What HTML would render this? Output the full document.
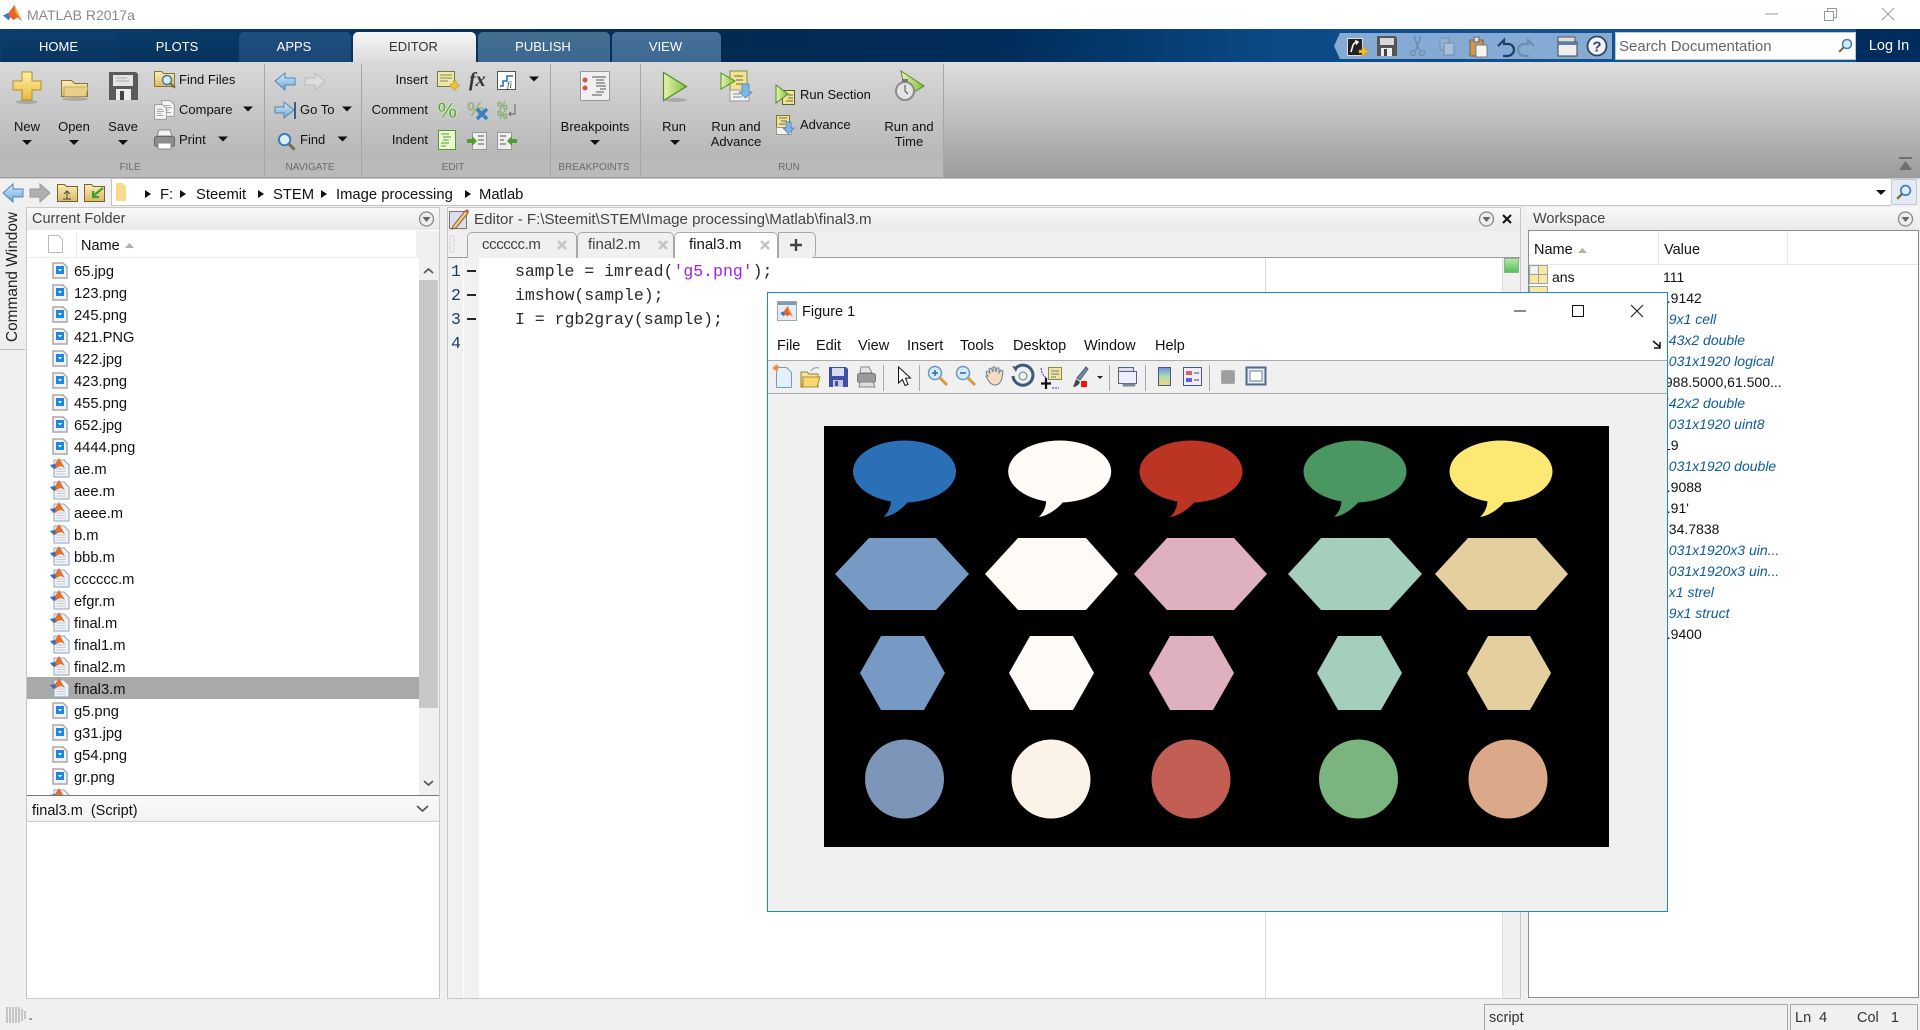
<!DOCTYPE html>
<html><head><meta charset="utf-8"><title>MATLAB R2017a</title>
<style>
html,body{margin:0;padding:0}
body{width:1920px;height:1030px;position:relative;overflow:hidden;background:#f0f0f0;font-family:"Liberation Sans",sans-serif;font-size:14.5px;color:#111}
.a{position:absolute;box-sizing:border-box}
.t{position:absolute;white-space:nowrap;line-height:20px;height:20px}
.c{transform:translateX(-50%)}
.e{transform:translateX(-100%)}
.rb{font-size:13px;color:#111}
.lb{font-size:10px;color:#6a6a6a}
.tab{position:absolute;top:32px;height:30px;border-radius:5px 5px 0 0;color:#fff;font-size:13px;line-height:30px;text-align:center;padding-right:2px;box-sizing:border-box}
.r{position:relative;height:22px;line-height:26px;padding-left:47px;font-size:14.7px;white-space:nowrap}
.r svg{position:absolute;left:25px;top:3px}
.r svg.mi{left:23px;top:1px}
.r.sel{background:#a9a9a9}
.code{font-family:"Liberation Mono",monospace;font-size:16.5px;color:#2a2a2a}
.v{position:absolute;white-space:nowrap;font-size:14px;line-height:20px;height:20px}
.i{font-style:italic;color:#0e5a9e}
.m{position:absolute;top:336px;font-size:14.5px;line-height:20px;white-space:nowrap;color:#111}
svg.o{position:absolute;left:0;top:0}
</style></head><body>

<!-- title bar -->
<div class="a" style="left:0;top:0;width:1920px;height:29px;background:#fff"></div>
<div class="t" style="left:27px;top:5px;font-size:14px;color:#8a8a8a">MATLAB R2017a</div>

<!-- blue bar -->
<div class="a" style="left:0;top:29px;width:1920px;height:33px;background:linear-gradient(90deg,#0b3c6c 0,#032b52 720px,#002c5a 1000px,#0b4a87 1280px,#12528f 1600px,#12528f 1920px)"></div>
<div class="tab" style="left:2px;width:115px;background:linear-gradient(#0c3d6d,#093560)">HOME</div>
<div class="tab" style="left:119px;width:118px;background:linear-gradient(#0a3a68,#07325c)">PLOTS</div>
<div class="tab" style="left:239px;width:112px;background:linear-gradient(#204e7f,#1a4776)">APPS</div>
<div class="tab" style="left:353px;width:123px;background:linear-gradient(#f6f6f6,#dcdcdc);color:#333">EDITOR</div>
<div class="tab" style="left:478px;width:132px;background:linear-gradient(#44708f,#3b6690)">PUBLISH</div>
<div class="tab" style="left:612px;width:109px;background:linear-gradient(#46719a,#3d6890)">VIEW</div>

<!-- quick access -->
<div class="a" style="left:1334px;top:33px;width:278px;height:26px;background:#85abd4;clip-path:polygon(6px 0,100% 0,100% 100%,6px 100%,0 50%)"></div>
<div class="a" style="left:1615px;top:32px;width:241px;height:28px;background:#fff;border:1px solid #b8c8d8"></div>
<div class="t" style="left:1619px;top:37px;font-size:15px;color:#666">Search Documentation</div>
<div class="a" style="left:1856px;top:29px;width:64px;height:33px;background:#002c5e"></div>
<div class="t c" style="left:1889px;top:36px;font-size:14.5px;color:#fff">Log In</div>

<!-- ribbon -->
<div class="a" style="left:0;top:62px;width:1920px;height:115px;background:linear-gradient(#dedede,#9d9d9d)"></div>
<div class="a" style="left:0;top:62px;width:943px;height:115px;background:linear-gradient(#d9d9d9,#b0b0b0)"></div>
<div class="a" style="left:0;top:159px;width:943px;height:18px;background:#bababa"></div>
<div class="a" style="left:264px;top:64px;width:1px;height:112px;background:#a6a6a6"></div>
<div class="a" style="left:361px;top:64px;width:1px;height:112px;background:#a6a6a6"></div>
<div class="a" style="left:550px;top:64px;width:1px;height:112px;background:#a6a6a6"></div>
<div class="a" style="left:640px;top:64px;width:1px;height:112px;background:#a6a6a6"></div>
<div class="a" style="left:943px;top:64px;width:1px;height:112px;background:#a6a6a6"></div>
<div class="a" style="left:0;top:177px;width:1920px;height:1px;background:#9c9c9c"></div>

<div class="t rb c" style="left:27px;top:117px">New</div>
<div class="t rb c" style="left:74px;top:117px">Open</div>
<div class="t rb c" style="left:123px;top:117px">Save</div>
<div class="t rb" style="left:179px;top:70px">Find Files</div>
<div class="t rb" style="left:179px;top:100px">Compare</div>
<div class="t rb" style="left:179px;top:130px">Print</div>
<div class="t rb" style="left:300px;top:100px">Go To</div>
<div class="t rb" style="left:300px;top:130px">Find</div>
<div class="t rb e" style="left:428px;top:70px">Insert</div>
<div class="t rb e" style="left:428px;top:100px">Comment</div>
<div class="t rb e" style="left:428px;top:130px">Indent</div>
<div class="t rb c" style="left:595px;top:117px">Breakpoints</div>
<div class="t rb c" style="left:674px;top:117px">Run</div>
<div class="t rb c" style="left:736px;top:117px">Run and</div>
<div class="t rb c" style="left:736px;top:132px">Advance</div>
<div class="t rb" style="left:800px;top:85px">Run Section</div>
<div class="t rb" style="left:800px;top:115px">Advance</div>
<div class="t rb c" style="left:909px;top:117px">Run and</div>
<div class="t rb c" style="left:909px;top:132px">Time</div>
<div class="t lb c" style="left:130px;top:158px">FILE</div>
<div class="t lb c" style="left:310px;top:158px">NAVIGATE</div>
<div class="t lb c" style="left:453px;top:158px">EDIT</div>
<div class="t lb c" style="left:594px;top:158px">BREAKPOINTS</div>
<div class="t lb c" style="left:789px;top:158px">RUN</div>

<!-- address bar -->
<div class="a" style="left:0;top:178px;width:1920px;height:29px;background:#f0f0f0;border-top:1px solid #d0d0d0"></div>
<div class="a" style="left:111px;top:178px;width:1780px;height:28px;background:#fff;border:1px solid #c4c4c4;border-width:1px 0 1px 1px"></div>
<div class="a" style="left:1891px;top:179px;width:26px;height:26px;background:#e4eaf3;border:1px solid #c4c8d0"></div>
<div class="t" style="left:160px;top:185px;font-size:14.8px">F:</div>
<div class="t" style="left:196px;top:185px;font-size:14.8px">Steemit</div>
<div class="t" style="left:273px;top:185px;font-size:14.8px">STEM</div>
<div class="t" style="left:336px;top:185px;font-size:14.8px">Image processing</div>
<div class="t" style="left:479px;top:185px;font-size:14.8px">Matlab</div>

<!-- Command Window side tab -->
<div class="a" style="left:0;top:207px;width:25px;height:143px;background:#eee;border-bottom:1px solid #bbb"></div>
<div class="t" style="left:13px;top:342px;width:132px;font-size:15.4px;transform-origin:0 0;transform:rotate(-90deg) translateY(-10px);color:#222">Command Window</div>

<!-- current folder panel -->
<div class="a" style="left:26px;top:207px;width:414px;height:792px;background:#fff;border:1px solid #c8c8c8"></div>
<div class="a" style="left:27px;top:208px;width:412px;height:22px;background:linear-gradient(#f8f8f8,#e8e8e8)"></div>
<div class="t" style="left:32px;top:209px;color:#444">Current Folder</div>
<div class="a" style="left:76px;top:231px;width:1px;height:26px;background:#e8e8e8"></div>
<div class="a" style="left:27px;top:257px;width:392px;height:1px;background:#ececec"></div>
<div class="a" style="left:416px;top:231px;width:23px;height:27px;background:#f0f0f0"></div>
<div class="t" style="left:81px;top:236px">Name</div>
<div class="a" style="left:419px;top:258px;width:20px;height:537px;background:#f0f0f0"></div>
<div class="a" style="left:419px;top:280px;width:19px;height:428px;background:#c8c8c8"></div>
<div class="a" style="left:27px;top:259px;width:392px;height:536px;overflow:hidden">
<div class="r"><svg width="16" height="17"><use href="#img"/></svg>65.jpg</div>
<div class="r"><svg width="16" height="17"><use href="#img"/></svg>123.png</div>
<div class="r"><svg width="16" height="17"><use href="#img"/></svg>245.png</div>
<div class="r"><svg width="16" height="17"><use href="#img"/></svg>421.PNG</div>
<div class="r"><svg width="16" height="17"><use href="#img"/></svg>422.jpg</div>
<div class="r"><svg width="16" height="17"><use href="#img"/></svg>423.png</div>
<div class="r"><svg width="16" height="17"><use href="#img"/></svg>455.png</div>
<div class="r"><svg width="16" height="17"><use href="#img"/></svg>652.jpg</div>
<div class="r"><svg width="16" height="17"><use href="#img"/></svg>4444.png</div>
<div class="r"><svg class="mi" width="20" height="20"><use href="#mf"/></svg>ae.m</div>
<div class="r"><svg class="mi" width="20" height="20"><use href="#mf"/></svg>aee.m</div>
<div class="r"><svg class="mi" width="20" height="20"><use href="#mf"/></svg>aeee.m</div>
<div class="r"><svg class="mi" width="20" height="20"><use href="#mf"/></svg>b.m</div>
<div class="r"><svg class="mi" width="20" height="20"><use href="#mf"/></svg>bbb.m</div>
<div class="r"><svg class="mi" width="20" height="20"><use href="#mf"/></svg>cccccc.m</div>
<div class="r"><svg class="mi" width="20" height="20"><use href="#mf"/></svg>efgr.m</div>
<div class="r"><svg class="mi" width="20" height="20"><use href="#mf"/></svg>final.m</div>
<div class="r"><svg class="mi" width="20" height="20"><use href="#mf"/></svg>final1.m</div>
<div class="r"><svg class="mi" width="20" height="20"><use href="#mf"/></svg>final2.m</div>
<div class="r sel"><svg class="mi" width="20" height="20"><use href="#mf"/></svg>final3.m</div>
<div class="r"><svg width="16" height="17"><use href="#img"/></svg>g5.png</div>
<div class="r"><svg width="16" height="17"><use href="#img"/></svg>g31.jpg</div>
<div class="r"><svg width="16" height="17"><use href="#img"/></svg>g54.png</div>
<div class="r"><svg width="16" height="17"><use href="#img"/></svg>gr.png</div>
<div class="r"><svg class="mi" width="20" height="20"><use href="#mf"/></svg></div>
</div>
<div class="a" style="left:27px;top:795px;width:412px;height:27px;background:linear-gradient(#fafafa,#f2f2f2);border-top:1px solid #777;border-bottom:1px solid #cfcfcf"></div>
<div class="t" style="left:32px;top:801px">final3.m&nbsp; (Script)</div>

<!-- editor panel -->
<div class="a" style="left:447px;top:207px;width:1074px;height:792px;background:#fff;border:1px solid #c8c8c8"></div>
<div class="a" style="left:448px;top:208px;width:1072px;height:23px;background:linear-gradient(#f8f8f8,#eaeaea)"></div>
<div class="t" style="left:474px;top:210px;font-size:15.1px;color:#444">Editor - F:\Steemit\STEM\Image processing\Matlab\final3.m</div>
<div class="a" style="left:448px;top:231px;width:1072px;height:27px;background:#f0f0f0;border-bottom:1px solid #9a9a9a"></div>
<div class="a" style="left:467px;top:232px;width:110px;height:26px;background:#f0f0f0;border:1px solid #a8a8a8;border-bottom:0;border-radius:5px 5px 0 0"></div>
<div class="a" style="left:577px;top:232px;width:97px;height:26px;background:#f0f0f0;border:1px solid #a8a8a8;border-bottom:0;border-radius:5px 5px 0 0"></div>
<div class="a" style="left:674px;top:232px;width:104px;height:26px;background:#fff;border:1px solid #a8a8a8;border-bottom:0;border-radius:5px 5px 0 0"></div>
<div class="a" style="left:778px;top:232px;width:38px;height:26px;background:#f0f0f0;border:1px solid #a8a8a8;border-bottom:0;border-radius:0 5px 5px 0"></div>
<div class="t" style="left:482px;top:235px;font-size:15px;letter-spacing:-.4px;color:#444">cccccc.m</div>
<div class="t" style="left:588px;top:235px;font-size:15px;color:#444">final2.m</div>
<div class="t" style="left:689px;top:235px;font-size:15px;color:#111">final3.m</div>
<div class="a" style="left:448px;top:258px;width:31px;height:740px;background:#f1f1f1"></div>
<div class="a" style="left:463px;top:258px;width:1px;height:740px;background:#fff"></div>
<div class="a" style="left:1265px;top:258px;width:1px;height:740px;background:#dcdcdc"></div>
<div class="a" style="left:1502px;top:258px;width:18px;height:740px;background:#f0f0f0;border-left:1px solid #ddd"></div>
<div class="t code" style="left:451px;top:262px;color:#1d3b5a">1</div>
<div class="t code" style="left:451px;top:286px;color:#1d3b5a">2</div>
<div class="t code" style="left:451px;top:310px;color:#1d3b5a">3</div>
<div class="t code" style="left:451px;top:334px;color:#1d3b5a">4</div>
<div class="a" style="left:467px;top:270px;width:9px;height:2px;background:#222"></div>
<div class="a" style="left:467px;top:294px;width:9px;height:2px;background:#222"></div>
<div class="a" style="left:467px;top:318px;width:9px;height:2px;background:#222"></div>
<div class="t code" style="left:515px;top:262px">sample = imread(<span style="color:#a020f0">'g5.png'</span>);</div>
<div class="t code" style="left:515px;top:286px">imshow(sample);</div>
<div class="t code" style="left:515px;top:310px">I = rgb2gray(sample);</div>
<div class="a" style="left:1504px;top:258px;width:15px;height:15px;background:linear-gradient(#b4e6a8,#4fc25a);border:1px solid #8fae8f"></div>

<!-- workspace -->
<div class="a" style="left:1527px;top:207px;width:392px;height:24px;background:linear-gradient(#f8f8f8,#e9e9e9)"></div>
<div class="a" style="left:1528px;top:230px;width:391px;height:768px;background:#fff;border:1px solid #8c8c92"></div>
<div class="t" style="left:1533px;top:209px;color:#444">Workspace</div>
<div class="a" style="left:1658px;top:231px;width:1px;height:33px;background:#e6e6e6"></div>
<div class="a" style="left:1787px;top:231px;width:1px;height:33px;background:#e6e6e6"></div>
<div class="a" style="left:1529px;top:264px;width:389px;height:1px;background:#e6e6e6"></div>
<div class="t" style="left:1534px;top:240px;font-size:14.5px">Name</div>
<div class="t" style="left:1664px;top:240px;font-size:14.5px">Value</div>
<div class="t" style="left:1552px;top:267px;font-size:14px">ans</div>
<div class="v" style="left:1663px;top:267px">111</div>
<div class="v" style="left:1659px;top:288px">0.9142</div>
<div class="v i" style="left:1661px;top:309px">19x1 cell</div>
<div class="v i" style="left:1661px;top:330px">543x2 double</div>
<div class="v i" style="left:1661px;top:351px">1031x1920 logical</div>
<div class="v" style="left:1661px;top:372px">[988.5000,61.500...</div>
<div class="v i" style="left:1661px;top:393px">542x2 double</div>
<div class="v i" style="left:1661px;top:414px">1031x1920 uint8</div>
<div class="v" style="left:1663px;top:435px">19</div>
<div class="v i" style="left:1661px;top:456px">1031x1920 double</div>
<div class="v" style="left:1659px;top:477px">0.9088</div>
<div class="v" style="left:1659px;top:498px">0.91'</div>
<div class="v" style="left:1661px;top:519px">534.7838</div>
<div class="v i" style="left:1661px;top:540px">1031x1920x3 uin...</div>
<div class="v i" style="left:1661px;top:561px">1031x1920x3 uin...</div>
<div class="v i" style="left:1661px;top:582px">1x1 strel</div>
<div class="v i" style="left:1661px;top:603px">19x1 struct</div>
<div class="v" style="left:1659px;top:624px">0.9400</div>

<!-- status bar -->
<div class="a" style="left:1484px;top:1004px;width:304px;height:26px;border:1px solid #a8a8a8;border-width:1px 0 0 1px;border-right:1px solid #a8a8a8"></div>
<div class="a" style="left:1790px;top:1004px;width:128px;height:26px;border:1px solid #a8a8a8;border-width:1px 1px 0 1px"></div>
<div class="t" style="left:1489px;top:1008px;font-size:14.5px;color:#333">script</div>
<div class="t" style="left:1795px;top:1008px;font-size:14.5px;color:#333">Ln&nbsp;&nbsp;4</div>
<div class="t" style="left:1857px;top:1008px;font-size:14.5px;color:#333">Col&nbsp;&nbsp;&nbsp;1</div>

<!-- base icons -->
<svg class="o" width="1920" height="1030" viewBox="0 0 1920 1030" style="pointer-events:none">
<defs>
<linearGradient id="gy" x1="0" y1="0" x2="0" y2="1"><stop offset="0" stop-color="#fff3a8"/><stop offset="1" stop-color="#e8b93a"/></linearGradient>
<linearGradient id="gf" x1="0" y1="0" x2="0" y2="1"><stop offset="0" stop-color="#fbeeb4"/><stop offset="1" stop-color="#d8b868"/></linearGradient>
<linearGradient id="gg" x1="0" y1="0" x2="1" y2="0"><stop offset="0" stop-color="#e8f5b0"/><stop offset="1" stop-color="#7fbf3a"/></linearGradient>
<linearGradient id="gb" x1="0" y1="0" x2="0" y2="1"><stop offset="0" stop-color="#d6ecfb"/><stop offset="1" stop-color="#6aa8dc"/></linearGradient>
<linearGradient id="gc" x1="0" y1="0" x2="0" y2="1"><stop offset="0" stop-color="#6f8fe0"/><stop offset=".5" stop-color="#a8e0b0"/><stop offset="1" stop-color="#f6d080"/></linearGradient>
<symbol id="img" viewBox="0 0 16 17"><path d="M1 1h10l4 4v11H1z" fill="#f3f3f3" stroke="#a8a8a8" stroke-width="1.5"/><rect x="4" y="4" width="8" height="8" fill="#1d86e0"/><path d="M6 7h4l-2 2.500z" fill="#fff"/></symbol>
<symbol id="mf" viewBox="0 0 20 20"><path d="M4 2h10l5 5v12H4z" fill="#eef1f6" stroke="#8aa4c8"/><path d="M6.500 11h9M6.500 13.500h9M6.500 16h9" stroke="#c4cdd8"/><path d="M0 7l5-1 4-6 3 5 3 5-4-2-3 1-3 2z" fill="#e4702a"/><path d="M0 7l5-1 1 3-2.500 2z" fill="#2f6fc4"/></symbol>
<symbol id="logo" viewBox="0 0 20 20"><path d="M0 11l6-3 3 3-3 5z" fill="#3a78c8"/><path d="M6 8l6-8 3 6 5 11-5-4-4 3-5-5z" fill="#e8622a"/><path d="M12 0l3 6 5 11-7-9z" fill="#f4a83a"/></symbol>
<symbol id="page" viewBox="0 0 18 22"><path d="M1 1h11l5 5v15H1z" fill="#f4f4f4" stroke="#8c8c8c"/><path d="M4 7h8M4 10h10M4 13h6M4 16h9" stroke="#888"/></symbol>
<symbol id="mag" viewBox="0 0 20 20"><circle cx="8" cy="8" r="6" fill="#d8ecfa" stroke="#3b79b8" stroke-width="2"/><path d="M12.500 12.500l6 6" stroke="#7a6a48" stroke-width="3"/></symbol>
</defs>

<use href="#logo" x="3" y="5" width="19" height="19"/>

<!-- window controls -->
<path d="M1765 14h13" stroke="#999" stroke-width="1"/>
<path d="M1824.500 11.500h9v9h-9zM1827.500 11.500v-3h9v9h-3" fill="none" stroke="#999"/>
<path d="M1882 8l12 12M1894 8l-12 12" stroke="#999"/>

<!-- New -->
<ellipse cx="27" cy="102" rx="11" ry="2" fill="#888" opacity=".5"/>
<path d="M22 72h10v9h9v9h-9v10H22V90H13v-9h9z" fill="url(#gy)" stroke="#b48d28"/>
<path d="M22 140h10l-5 5z" fill="#111"/>
<!-- Open -->
<ellipse cx="75" cy="99" rx="13" ry="2" fill="#888" opacity=".5"/>
<path d="M61.500 80.500h10l3 3h13v13h-26z" fill="url(#gf)" stroke="#8f7232"/>
<path d="M64 87h24l-2 9.500H64z" fill="#e8cf86" stroke="#a48a48" stroke-width=".6"/>
<path d="M69 140h10l-5 5z" fill="#111"/>
<!-- Save -->
<path d="M109 72h27l2 2v26h-29z" fill="#5a5a5a"/>
<rect x="113" y="75" width="20" height="11" fill="#e4e4e4"/>
<path d="M116 78h11M116 81h13" stroke="#aaa"/>
<rect x="116" y="89" width="15" height="11" fill="#ececec"/>
<rect x="120" y="91" width="4" height="9" fill="#444"/>
<path d="M118 140h10l-5 5z" fill="#111"/>
<!-- Find Files -->
<path d="M154.500 71.500h7l2 2h11v13h-20z" fill="url(#gf)" stroke="#8f7232"/>
<use href="#mag" x="161" y="74" width="15" height="15"/>
<!-- Compare -->
<use href="#page" x="161" y="100" width="14" height="17"/>
<use href="#page" x="154" y="104" width="13" height="16"/>
<path d="M243 106.500h10l-5 5z" fill="#111"/>
<!-- Print -->
<path d="M159 130h11l2 6h-15z" fill="#f4f4f4" stroke="#888"/>
<rect x="154.500" y="136.500" width="20" height="10" rx="2" fill="#8f8f8f" stroke="#666"/>
<rect x="158" y="143" width="13" height="6" fill="#fff" stroke="#888"/>
<path d="M218 136.500h10l-5 5z" fill="#111"/>
<!-- Navigate -->
<path d="M275 81l10-8v5h10v7h-10v5z" fill="url(#gb)" stroke="#5583ad"/>
<path d="M325 81l-10-8v5h-10v7h10v5z" fill="#dcdcdc" stroke="#bbb"/>
<path d="M275 107h9v-5l10 8-10 8v-5h-9z" fill="url(#gb)" stroke="#5583ad"/>
<rect x="294" y="102" width="2" height="17" fill="#3a5f88"/>
<path d="M342 106.500h10l-5 5z" fill="#111"/>
<use href="#mag" x="277" y="132" width="19" height="19"/>
<path d="M337.500 136.500h10l-5 5z" fill="#111"/>
<!-- Edit -->
<rect x="437.500" y="71.500" width="17" height="15" fill="#efe9a6" stroke="#6e7a4a"/>
<path d="M440 75h12M440 78h12M440 81h8" stroke="#88885a"/>
<path d="M450 84h3v-3h3v3h3v3h-3v3h-3v-3h-3z" fill="#f2c232" stroke="#a88a24" stroke-width=".5"/>
<text x="469" y="86" font-family="Liberation Serif,serif" font-style="italic" font-weight="bold" font-size="20" fill="#333">fx</text>
<rect x="497.500" y="71.500" width="18" height="18" fill="#fff" stroke="#555"/>
<path d="M500 86h3v-5h4v-5h6" fill="none" stroke="#2a6fc4" stroke-width="1.600"/>
<text x="507" y="88" font-size="9" fill="#333" font-family="Liberation Serif,serif" font-style="italic">fi</text>
<path d="M529 76.500h10l-5 5z" fill="#111"/>
<text x="437.500" y="118" font-size="22" font-weight="bold" fill="#5aa336" stroke="#f0f4e8" stroke-width=".5">%</text>
<text x="467" y="116" font-size="20" font-weight="bold" fill="#97b388">%</text>
<path d="M477 109l10 10M487 109l-10 10" stroke="#3b7fc0" stroke-width="3.600"/>
<text x="497" y="110" font-size="12" font-weight="bold" fill="#7ea860">%</text>
<text x="497" y="119" font-size="12" font-weight="bold" fill="#7ea860">%</text>
<path d="M515 104v10h-6m2-2l-2 2 2 2" fill="none" stroke="#666"/>
<rect x="438.500" y="130.500" width="17" height="19" fill="#eff6d6" stroke="#4f9d2e"/>
<path d="M441 134h8M443 137h8M443 140h6M441 143h8M441 146h5" stroke="#4f9d2e"/>
<rect x="472.500" y="132.500" width="14" height="17" fill="#eee" stroke="#999"/>
<path d="M478 136h6M478 140h6M478 144h6" stroke="#555"/>
<path d="M467 139h5v-3l5 5-5 5v-3h-5z" fill="#4f9d2e"/>
<rect x="497.500" y="132.500" width="14" height="17" fill="#eee" stroke="#999"/>
<path d="M500 136h6M500 140h4M500 144h6" stroke="#555"/>
<path d="M517 139h-5v-3l-5 5 5 5v-3h5z" fill="#4f9d2e"/>
<!-- Breakpoints -->
<rect x="580.500" y="71.500" width="29" height="29" rx="1" fill="#f0f0f0" stroke="#999"/>
<circle cx="585" cy="80" r="2.500" fill="#d9534a"/><circle cx="585" cy="88" r="2.500" fill="#d9534a"/>
<path d="M592 77h14M596 80h8M596 83h9M596 86h10M600 89h6M596 92h8M592 95h10" stroke="#555"/>
<path d="M590 140h10l-5 5z" fill="#111"/>
<!-- Run -->
<ellipse cx="676" cy="100" rx="11" ry="2" fill="#888" opacity=".5"/>
<path d="M663.500 72.500l23 14-23 14z" fill="url(#gg)" stroke="#4f8a2a" stroke-width="1.200"/>
<path d="M670 140h10l-5 5z" fill="#111"/>
<!-- Run and advance -->
<rect x="730" y="71" width="17" height="20" fill="#f3e48c" stroke="#7d8a5a"/>
<path d="M734 76h9M736 80h7M736 84h9" stroke="#666"/>
<path d="M721 73l14 8-14 8z" fill="url(#gg)" stroke="#4f8a2a"/>
<rect x="730" y="90" width="19" height="11" fill="#f2f2f2" stroke="#999"/>
<path d="M733 94h7M733 97h9" stroke="#888"/>
<path d="M742 84h7v8h3l-6.500 6-6.500-6h3z" fill="#7fb6e4" stroke="#4a7fb0" stroke-width=".7"/>
<!-- run section -->
<rect x="782.500" y="90.500" width="12" height="14" fill="#f3e48c" stroke="#56622f"/>
<path d="M788 95h5M788 98h5M786 101h7" stroke="#666"/>
<path d="M776 85l12 9-12 9z" fill="url(#gg)" stroke="#4f8a2a"/>
<!-- advance -->
<rect x="776.500" y="115.500" width="13" height="13" fill="#f3e48c" stroke="#6c7a40"/>
<path d="M779 118h8M781 121h6M779 124h6" stroke="#666"/>
<rect x="776.500" y="127.500" width="15" height="7" fill="#f2f2f2" stroke="#999"/>
<path d="M786 122h5v6h3l-5.500 6-5.500-6h3z" fill="#7fb6e4" stroke="#4a7fb0" stroke-width=".7"/>
<!-- run and time -->
<path d="M901 71l23 15-18 11z" fill="url(#gg)" stroke="#4f8a2a"/>
<circle cx="905" cy="91" r="9" fill="#e4e4e4" stroke="#8a8a8a" stroke-width="2"/>
<rect x="902" y="79" width="6" height="3" fill="#777"/>
<path d="M905 85v6l3 3" fill="none" stroke="#444"/>
<!-- collapse -->
<rect x="1899" y="157" width="13" height="2" fill="#6f6f6f"/>
<path d="M1899 170l6.500-9 6.500 9z" fill="#6f6f6f"/>

<!-- quick access icons -->
<rect x="1347.500" y="38.500" width="15" height="17" fill="#222" stroke="#ddd"/>
<path d="M1351 52l2-7c1-2 3-3 5-3m-3-1.500l3 1.500-2 2.500" stroke="#fff" fill="none" stroke-width="1.500"/>
<path d="M1359 50h3v-3h3v3h3v3h-3v3h-3v-3h-3z" fill="#f2c232" stroke="#a88a24" stroke-width=".5"/>
<path d="M1377 36h18l2 2v18h-20z" fill="#555"/><rect x="1380" y="38" width="14" height="7" fill="#d8d8d8"/><rect x="1381" y="48" width="11" height="8" fill="#ececec"/><rect x="1384" y="49" width="3" height="7" fill="#444"/>
<path d="M1421 36l-5 14M1414 36l5 14" stroke="#6d8aab" fill="none" stroke-width="1.500"/><circle cx="1413" cy="53" r="2.500" fill="none" stroke="#6d8aab" stroke-width="1.300"/><circle cx="1422" cy="53" r="2.500" fill="none" stroke="#6d8aab" stroke-width="1.300"/>
<rect x="1440" y="38" width="9" height="12" fill="#97b2cf" stroke="#6f8dab"/><rect x="1444" y="43" width="10" height="12" fill="#a8bfd8" stroke="#6f8dab"/>
<rect x="1470" y="40" width="13" height="16" fill="#c99a56" stroke="#7d5e2a"/><rect x="1474" y="37" width="5" height="5" fill="#ddd" stroke="#666"/><rect x="1476" y="45" width="11" height="12" fill="#f4f4f4" stroke="#777"/>
<path d="M1498 46l6-6v4h4c4 0 6 3 6 6s-3 6-7 6h-4" fill="none" stroke="#1d3e66" stroke-width="2.200"/>
<path d="M1534 46l-6-6v4h-4c-4 0-6 3-6 6s3 6 7 6h4" fill="none" stroke="#6f8dab" stroke-width="2.200"/>
<rect x="1558" y="37" width="17" height="15" fill="#ddd" stroke="#555"/>
<rect x="1558" y="42" width="19" height="14" fill="#eee" stroke="#444"/><rect x="1558" y="42" width="19" height="3" fill="#5a7ea8"/>
<circle cx="1597" cy="46" r="9.500" fill="#f0f4f8" stroke="#32465c" stroke-width="1.800"/>
<text x="1597" y="51.500" font-size="15" font-weight="bold" text-anchor="middle" fill="#32465c">?</text>
<use href="#mag" x="1838" y="38" width="15" height="15" transform="translate(3691 0) scale(-1 1)"/>
<!-- address icons -->
<path d="M3 193l10-9v5h10v8H13v5z" fill="url(#gb)" stroke="#5583ad"/>
<path d="M50 193l-10-9v5H30v8h10v5z" fill="#b0b0b0" stroke="#999"/>
<path d="M57.500 184.500h7l2 2h11v15h-20z" fill="url(#gf)" stroke="#7a6230"/>
<path d="M67 199v-8m-3 3l3-3 3 3M63 199h8" stroke="#444" fill="none"/>
<path d="M84.500 184.500h7l2 2h11v15h-20z" fill="url(#gf)" stroke="#7a6230"/>
<path d="M103 188l-10 8m0-5v6h6" stroke="#3f9c2e" stroke-width="2.200" fill="none"/>
<path d="M116 183h6l4 3v15h-10z" fill="#f7dc8a"/>
<path d="M145 190l6 4-6 4zM180 190l6 4-6 4zM258 190l6 4-6 4zM321 190l6 4-6 4zM465 190l6 4-6 4z" fill="#111"/>
<path d="M1876 190h10l-5 5z" fill="#111"/>
<use href="#mag" x="1896" y="184" width="16" height="16" transform="translate(3808 0) scale(-1 1)"/>

<!-- panel bits -->
<circle cx="426.500" cy="219" r="7" fill="#eee" stroke="#888" stroke-width="1.300"/><path d="M422.500 217h8l-4 5z" fill="#666"/>
<circle cx="1486.500" cy="219" r="7" fill="#eee" stroke="#888" stroke-width="1.300"/><path d="M1482.500 217h8l-4 5z" fill="#666"/>
<circle cx="1905.500" cy="219" r="7" fill="#eee" stroke="#888" stroke-width="1.300"/><path d="M1901.500 217h8l-4 5z" fill="#666"/>
<path d="M1503 215l8 8M1511 215l-8 8" stroke="#111" stroke-width="2"/>
<path d="M48.500 235.500h10l4 4v13h-14z" fill="#fff" stroke="#bbb"/>
<path d="M125 248l4.500-5 4.500 5z" fill="#b4b49e"/>
<path d="M1578 253l4.500-5 4.500 5z" fill="#b4b49e"/>
<path d="M424 273l4.500-4 4.500 4M424 781l4.500 4 4.500-4M417 806l5.500 5 5.500-5" fill="none" stroke="#555" stroke-width="1.700"/>
<!-- editor icon -->
<rect x="449.500" y="211.500" width="17" height="17" fill="#dde" stroke="#777"/>
<path d="M453 226l12-15 3 2-12 15-4 1z" fill="#e8c884" stroke="#8a5a2a"/>
<path d="M465 211l3 2 1-2-2-2z" fill="#c85a4a"/>
<rect x="450" y="236" width="4" height="16" fill="none" stroke="#bbb" stroke-dasharray="1 1"/>
<path d="M558 241l8 8M566 241l-8 8M659 241l8 8M667 241l-8 8M761 241l8 8M769 241l-8 8" stroke="#c4c4c4" stroke-width="2.500"/>
<path d="M790 245h12M796 239v12" stroke="#444" stroke-width="2.400"/>
<!-- workspace icons -->
<rect x="1529.500" y="265.500" width="18" height="18" fill="#fbe89c" stroke="#8fa4bc"/>
<path d="M1538.500 265v18M1529 274.500h18" stroke="#8fa4bc"/>
<rect x="1530.500" y="266.500" width="7" height="7" fill="#eef4fb"/>
<rect x="1529.500" y="286.500" width="18" height="18" fill="#fbe89c" stroke="#8fa4bc"/>
<!-- status grip -->
<path d="M7 1007v16M10 1007v16M13 1007v16M16 1007v16M19 1007v16M22 1009v12M25 1011v8" stroke="#9a9a9a"/>
<path d="M29 1019h3" stroke="#555"/>
</svg>

<!-- FIGURE WINDOW -->
<div class="a" style="left:767px;top:292px;width:901px;height:620px;background:#f0f0f0;border:1px solid #1b85d8"></div>
<div class="a" style="left:768px;top:293px;width:899px;height:67px;background:#fff"></div>
<div class="a" style="left:768px;top:360px;width:899px;height:1px;background:#aaa"></div>
<div class="a" style="left:768px;top:393px;width:899px;height:1px;background:#aaa"></div>
<div class="t" style="left:802px;top:302px;font-size:14.5px">Figure 1</div>
<div class="m" style="left:777px">File</div>
<div class="m" style="left:816px">Edit</div>
<div class="m" style="left:858px">View</div>
<div class="m" style="left:907px">Insert</div>
<div class="m" style="left:960px">Tools</div>
<div class="m" style="left:1013px">Desktop</div>
<div class="m" style="left:1084px">Window</div>
<div class="m" style="left:1155px">Help</div>
<div class="a" style="left:824px;top:426px;width:785px;height:421px;background:#000"></div>

<svg class="o" width="1920" height="1030" viewBox="0 0 1920 1030" style="pointer-events:none">
<defs><g id="bub"><ellipse cx="904.500" cy="471.500" rx="51.500" ry="31"/><path d="M891 500C891 508 887 514 883.500 517C892 516 901 510 908 502z"/></g></defs>
<!-- figure icon -->
<rect x="777.500" y="301.500" width="19" height="19" fill="#e8eef4" stroke="#9aa6b2"/>
<rect x="778" y="302" width="18" height="3" fill="#7d9ab8"/>
<use href="#logo" x="779" y="306" width="15" height="13"/>
<path d="M1514 311h12" stroke="#111"/>
<rect x="1572.500" y="305.500" width="11" height="11" fill="none" stroke="#111"/>
<path d="M1631 305l12 12M1643 305l-12 12" stroke="#111"/>
<path d="M1653 341l7 6M1660 342v6h-6" stroke="#111" fill="none" stroke-width="1.500"/>

<!-- toolbar icons -->
<path d="M776.500 367.500h10l5 5v15h-15z" fill="#e4f0fb" stroke="#7a9cc0"/>
<path d="M772 368l3-2 1-2 2 2 2 1-2 2-1 3-2-2z" fill="#f08a4a"/>
<path d="M801 372h6l2 2h9v13h-17z" fill="url(#gf)" stroke="#9a7c2e"/>
<path d="M803 377h17l-3 10h-14z" fill="#f6d970" stroke="#b0902e"/>
<path d="M811 371c2-3 5-4 8-3" stroke="#7a9ab8" fill="none"/>
<path d="M829 367h17l2 2v18h-19z" fill="#3f4ea8"/><rect x="832" y="368" width="12" height="8" fill="#d8dcf0"/><rect x="833" y="380" width="10" height="7" fill="#c4c8e0"/><rect x="835" y="381" width="3" height="5" fill="#3f4ea8"/>
<path d="M861 367h8l3 6h-12z" fill="#e6e6e6" stroke="#888"/><rect x="857.500" y="373.500" width="18" height="9" rx="2" fill="#9a9a9a" stroke="#777"/><path d="M860 382h13l2 5h-16z" fill="#ddd" stroke="#888"/>
<path d="M883.500 365v26M919.500 365v26M1109.500 365v26M1145.500 365v26M1209.500 365v26" stroke="#aaa"/>
<path d="M898.500 367v16l4-3.500 2.500 6 3-1.200-2.500-6 5-.3z" fill="#fff" stroke="#111"/>
<circle cx="935" cy="373" r="6.500" fill="#d6ecfb" stroke="#6d96c4" stroke-width="1.500"/><path d="M932 373h6M935 370v6" stroke="#2a68b0" stroke-width="1.500"/><path d="M940 378l7 7" stroke="#d89a3e" stroke-width="3"/>
<circle cx="963" cy="373" r="6.500" fill="#d6ecfb" stroke="#6d96c4" stroke-width="1.500"/><path d="M960 373h6" stroke="#2a68b0" stroke-width="1.500"/><path d="M968 378l7 7" stroke="#d89a3e" stroke-width="3"/>
<path d="M988 376l-2-3 1-2 3 2-1-4 2-1 2 4 0-5 2 0 1 5 1-4 2 0 0 5 2-3 2 1-1 7c-1 4-3 7-7 7s-6-3-9-9z" fill="#f6dcc2" stroke="#6a7f9c"/>
<path d="M1016 368a10 10 0 1 1-3 8" fill="none" stroke="#3e5878" stroke-width="3"/><path d="M1012 366l6 1-2 5z" fill="#3e5878"/><circle cx="1023" cy="376" r="4" fill="none" stroke="#5a7a9a"/>
<rect x="1048.500" y="367.500" width="13" height="12" fill="#efe6a4" stroke="#8a8a50"/><path d="M1051 371h8M1051 374h8M1051 377h5" stroke="#777"/>
<path d="M1046 378v11M1041 383.500h10" stroke="#111" stroke-width="2.200"/>
<path d="M1041 368c1 6 3 9 6 10M1052 388h7" stroke="#3030d0" fill="none" stroke-dasharray="2 1"/>
<path d="M1086 367l2 2-8 11-3-2z" fill="#7a8ca8" stroke="#4a5a70"/><path d="M1076 379l4 3c-1 3-4 5-7 5 1-2 2-5 3-8z" fill="#444"/>
<rect x="1081" y="381" width="6" height="6" fill="#f01010"/>
<path d="M1097 376h6l-3 3z" fill="#222"/>
<rect x="1118.500" y="367.500" width="15" height="12" fill="#dde" stroke="#567"/><rect x="1118.500" y="371.500" width="18" height="12" fill="#eef" stroke="#567"/>
<path d="M1124 385h10" stroke="#789" stroke-width="3" stroke-linecap="round"/>
<rect x="1158.500" y="367.500" width="12" height="18" fill="url(#gc)" stroke="#4a5a78"/>
<rect x="1183.500" y="367.500" width="18" height="18" fill="#eef" stroke="#4a5a78"/><rect x="1186" y="371" width="6" height="4" fill="#e06060"/><rect x="1186" y="378" width="6" height="4" fill="#6060e0"/><path d="M1194 373h5M1194 380h5" stroke="#445"/>
<rect x="1221.500" y="370.500" width="13" height="13" rx="1" fill="#9e9e9e" stroke="#aaa"/>
<rect x="1246.500" y="367.500" width="19" height="17" fill="#e8ecf4" stroke="#4f6a8c" stroke-width="2"/><rect x="1250" y="371" width="12" height="10" fill="#fff" stroke="#6a82a0"/>

<!-- image shapes -->
<use href="#bub" fill="#2b70b7"/>
<use href="#bub" x="155.200" fill="#fefaf5"/>
<use href="#bub" x="286.500" fill="#bc3524"/>
<use href="#bub" x="450.500" fill="#4b9763"/>
<use href="#bub" x="596.500" fill="#fde873"/>
<path d="M835 574L869 538H936L969 574L936 610H869z" fill="#779ac5"/>
<path d="M985 574L1018 538H1086L1118 574L1086 610H1018z" fill="#fefaf5"/>
<path d="M1134 574L1167 538H1234L1267 574L1234 610H1167z" fill="#dfb1bf"/>
<path d="M1288 574L1321 538H1389L1422 574L1389 610H1321z" fill="#a5cfbd"/>
<path d="M1435 574L1468 538H1536L1568 574L1536 610H1468z" fill="#e4d09f"/>
<path d="M860 673L881 636H924L945 673L924 710H881z" fill="#779ac5"/>
<path d="M1009 673L1030 636H1073L1094 673L1073 710H1030z" fill="#fefaf5"/>
<path d="M1149 673L1170 636H1213L1234 673L1213 710H1170z" fill="#dfb1bf"/>
<path d="M1317 673L1338 636H1381L1402 673L1381 710H1338z" fill="#a5cfbd"/>
<path d="M1467 673L1488 636H1530L1551 673L1530 710H1488z" fill="#e4d09f"/>
<circle cx="904.500" cy="779" r="39.500" fill="#7d95b8"/>
<circle cx="1051" cy="779" r="39.500" fill="#fbf3e8"/>
<circle cx="1191" cy="779" r="39.500" fill="#c25e54"/>
<circle cx="1358.500" cy="779" r="39.500" fill="#7ab47e"/>
<circle cx="1508" cy="779" r="39.500" fill="#dba889"/>
</svg>
</body></html>
